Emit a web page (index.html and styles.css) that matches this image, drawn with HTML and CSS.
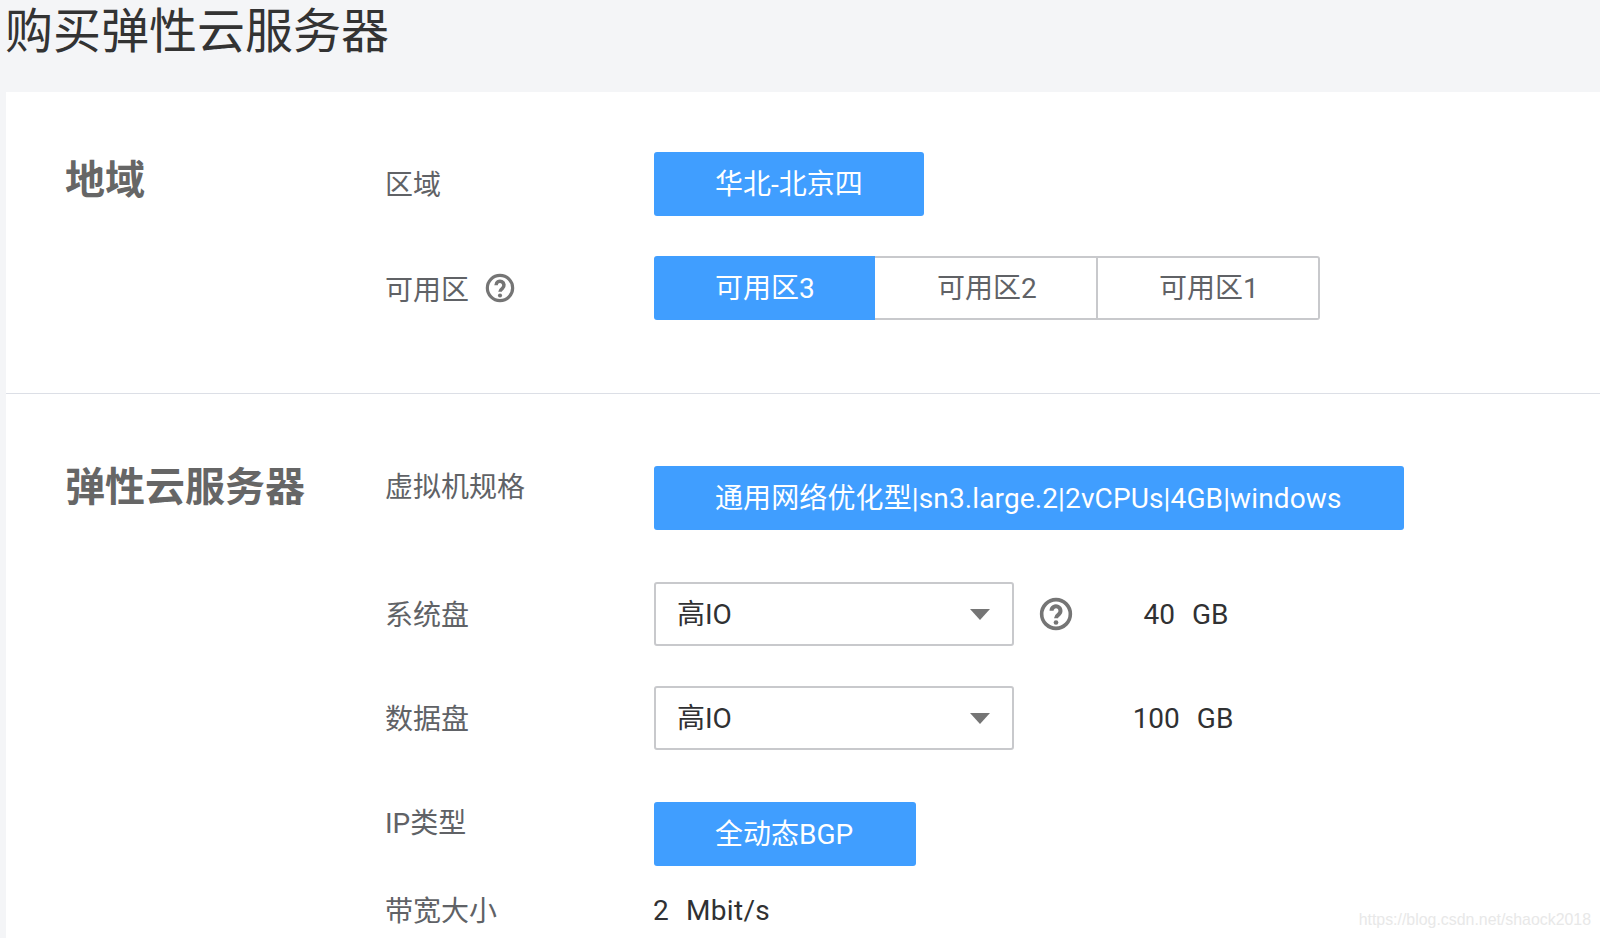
FILE: index.html
```html
<!DOCTYPE html>
<html lang="zh-CN">
<head>
<meta charset="utf-8">
<title>购买弹性云服务器</title>
<link rel="stylesheet" href="styles.css">
</head>
<body>
<h1 class="page-title">购买弹性云服务器</h1>
<main class="panel">
  <section class="section section-region">
    <h2 class="section-title">地域</h2>
    <div class="rows">
      <div class="row row-region">
        <div class="label">区域</div>
        <div class="btn btn-region">华北-北京四</div>
      </div>
      <div class="row">
        <div class="label label-help">可用区
          <svg class="help help-small" viewBox="0 0 32 32"><circle cx="16" cy="16" r="13.5"/><path d="M11.8 13a4.2 4.2 0 1 1 6.8 3.3c-1.7 1.3-2.6 2-2.6 3.7"/><circle class="dot" cx="16" cy="24" r="2.2"/></svg>
        </div>
        <div class="zones">
          <div class="zone zone-active">可用区3</div>
          <div class="zone zone-middle">可用区2</div>
          <div class="zone">可用区1</div>
        </div>
      </div>
    </div>
  </section>
  <section class="section section-server">
    <h2 class="section-title">弹性云服务器</h2>
    <div class="rows">
      <div class="row row-spec">
        <div class="label label-top">虚拟机规格</div>
        <div class="btn btn-spec">通用网络优化型|sn3.large.2|2vCPUs|4GB|windows</div>
      </div>
      <div class="row row-disk1">
        <div class="label">系统盘</div>
        <div class="select"><span>高IO</span><i class="caret"></i></div>
        <div class="help-cell">
          <svg class="help help-large" viewBox="0 0 32 32"><circle cx="16" cy="16" r="13.5"/><path d="M11.8 13a4.2 4.2 0 1 1 6.8 3.3c-1.7 1.3-2.6 2-2.6 3.7"/><circle class="dot" cx="16" cy="24" r="2.2"/></svg>
        </div>
        <div class="size"><span>40</span><span>GB</span></div>
      </div>
      <div class="row row-disk2">
        <div class="label">数据盘</div>
        <div class="select"><span>高IO</span><i class="caret"></i></div>
        <div class="help-cell"></div>
        <div class="size size-wide"><span>100</span><span>GB</span></div>
      </div>
      <div class="row row-ip">
        <div class="label label-top">IP类型</div>
        <div class="btn btn-ip">全动态BGP</div>
      </div>
      <div class="row row-band">
        <div class="label label-band">带宽大小</div>
        <div class="band"><span>2</span><span>Mbit/s</span></div>
      </div>
    </div>
  </section>
</main>
<div class="watermark">https://blog.csdn.net/shaock2018</div>
</body>
</html>
```
FILE: styles.css
```css
* { box-sizing: border-box; }
html, body { margin: 0; height: 938px; overflow: hidden; }
body {
  background: #f4f5f7;
  font-family: Roboto, "Noto Sans CJK SC", sans-serif;
  font-size: 28px;
  color: #303133;
  position: relative;
}
.page-title {
  margin: 0;
  height: 92px;
  padding-left: 5px;
  font-size: 48px;
  font-weight: 400;
  line-height: 64px;
  color: #333;
}
.panel {
  margin-left: 6px;
  background: #fff;
  height: 846px;
}
.section { display: flex; }
.section-region { padding: 60px 0 73px; border-bottom: 1px solid #dcdfe6; }
.section-server { padding-top: 72px; }
.section-title {
  margin: 0;
  width: 379px;
  padding-left: 59px;
  font-size: 40px;
  font-weight: 700;
  line-height: 58px;
  color: #666;
  flex: none;
}
.section-server .section-title { margin-top: -7px; }
.rows { display: flex; flex-direction: column; }
.row { display: flex; align-items: center; height: 64px; }
.row + .row { margin-top: 40px; }
.row + .row-disk1, .row + .row-ip { margin-top: 52px; }
.row + .row-band { margin-top: 13px; }
.label {
  width: 269px;
  flex: none;
  color: #606266;
  line-height: 40px;
  padding-top: 3px;
  display: flex;
  align-items: center;
}
.label-help { padding-top: 5px; }
.label-band { padding-top: 1px; }
.label-top { align-self: flex-start; margin-top: 2px; padding-top: 0; height: 40px; }
.btn {
  height: 64px;
  line-height: 66px;
  background: #409eff;
  color: #fff;
  border-radius: 3px;
  padding: 0 61px;
  white-space: nowrap;
}
.btn-region { width: 270px; }
.btn-spec { width: 750px; letter-spacing: 0.12px; }
.btn-ip { width: 262px; }
.zones { display: flex; height: 64px; }
.zone {
  width: 222px;
  height: 64px;
  line-height: 62px;
  padding-left: 61px;
  border: 2px solid #c8c9cc;
  border-left: 0;
  color: #606266;
}
.zone-middle { width: 223px; padding-left: 62px; }
.zone:last-child { border-radius: 0 3px 3px 0; }
.zone-active {
  width: 221px;
  line-height: 66px;
  background: #409eff;
  border: 0;
  color: #fff;
  border-radius: 3px 0 0 3px;
}
.help { fill: none; stroke: #757575; display: block; flex: none; }
.help .dot { fill: #757575; stroke: none; }
.help circle { stroke-width: 3.4; }
.help path { stroke-width: 3.8; }
.help-small { width: 30px; height: 30px; margin-left: 16px; margin-top: -6px; }
.help-large { width: 34px; height: 34px; }
.select {
  width: 360px;
  height: 64px;
  border: 2px solid #c8c9cc;
  border-radius: 3px;
  padding: 0 22px 0 21px;
  display: flex;
  align-items: center;
  justify-content: space-between;
  color: #303133;
}
.select span { margin-bottom: 5px; }
.caret {
  width: 0;
  height: 0;
  border-left: 10px solid transparent;
  border-right: 10px solid transparent;
  border-top: 11px solid #757575;
}
.help-cell { width: 86px; padding-left: 25px; flex: none; }
.size {
  width: 172px;
  display: flex;
  justify-content: center;
  gap: 17px;
  color: #303133;
}
.size-wide { margin-left: -3px; }
.band { display: flex; gap: 17px; color: #303133; margin: -1px 0 0 -1px; letter-spacing: 0.3px; }
.watermark {
  position: absolute;
  right: 9px;
  bottom: 9px;
  font-family: "Liberation Sans", sans-serif;
  font-size: 15.9px;
  color: #e8e8e8;
}
```
